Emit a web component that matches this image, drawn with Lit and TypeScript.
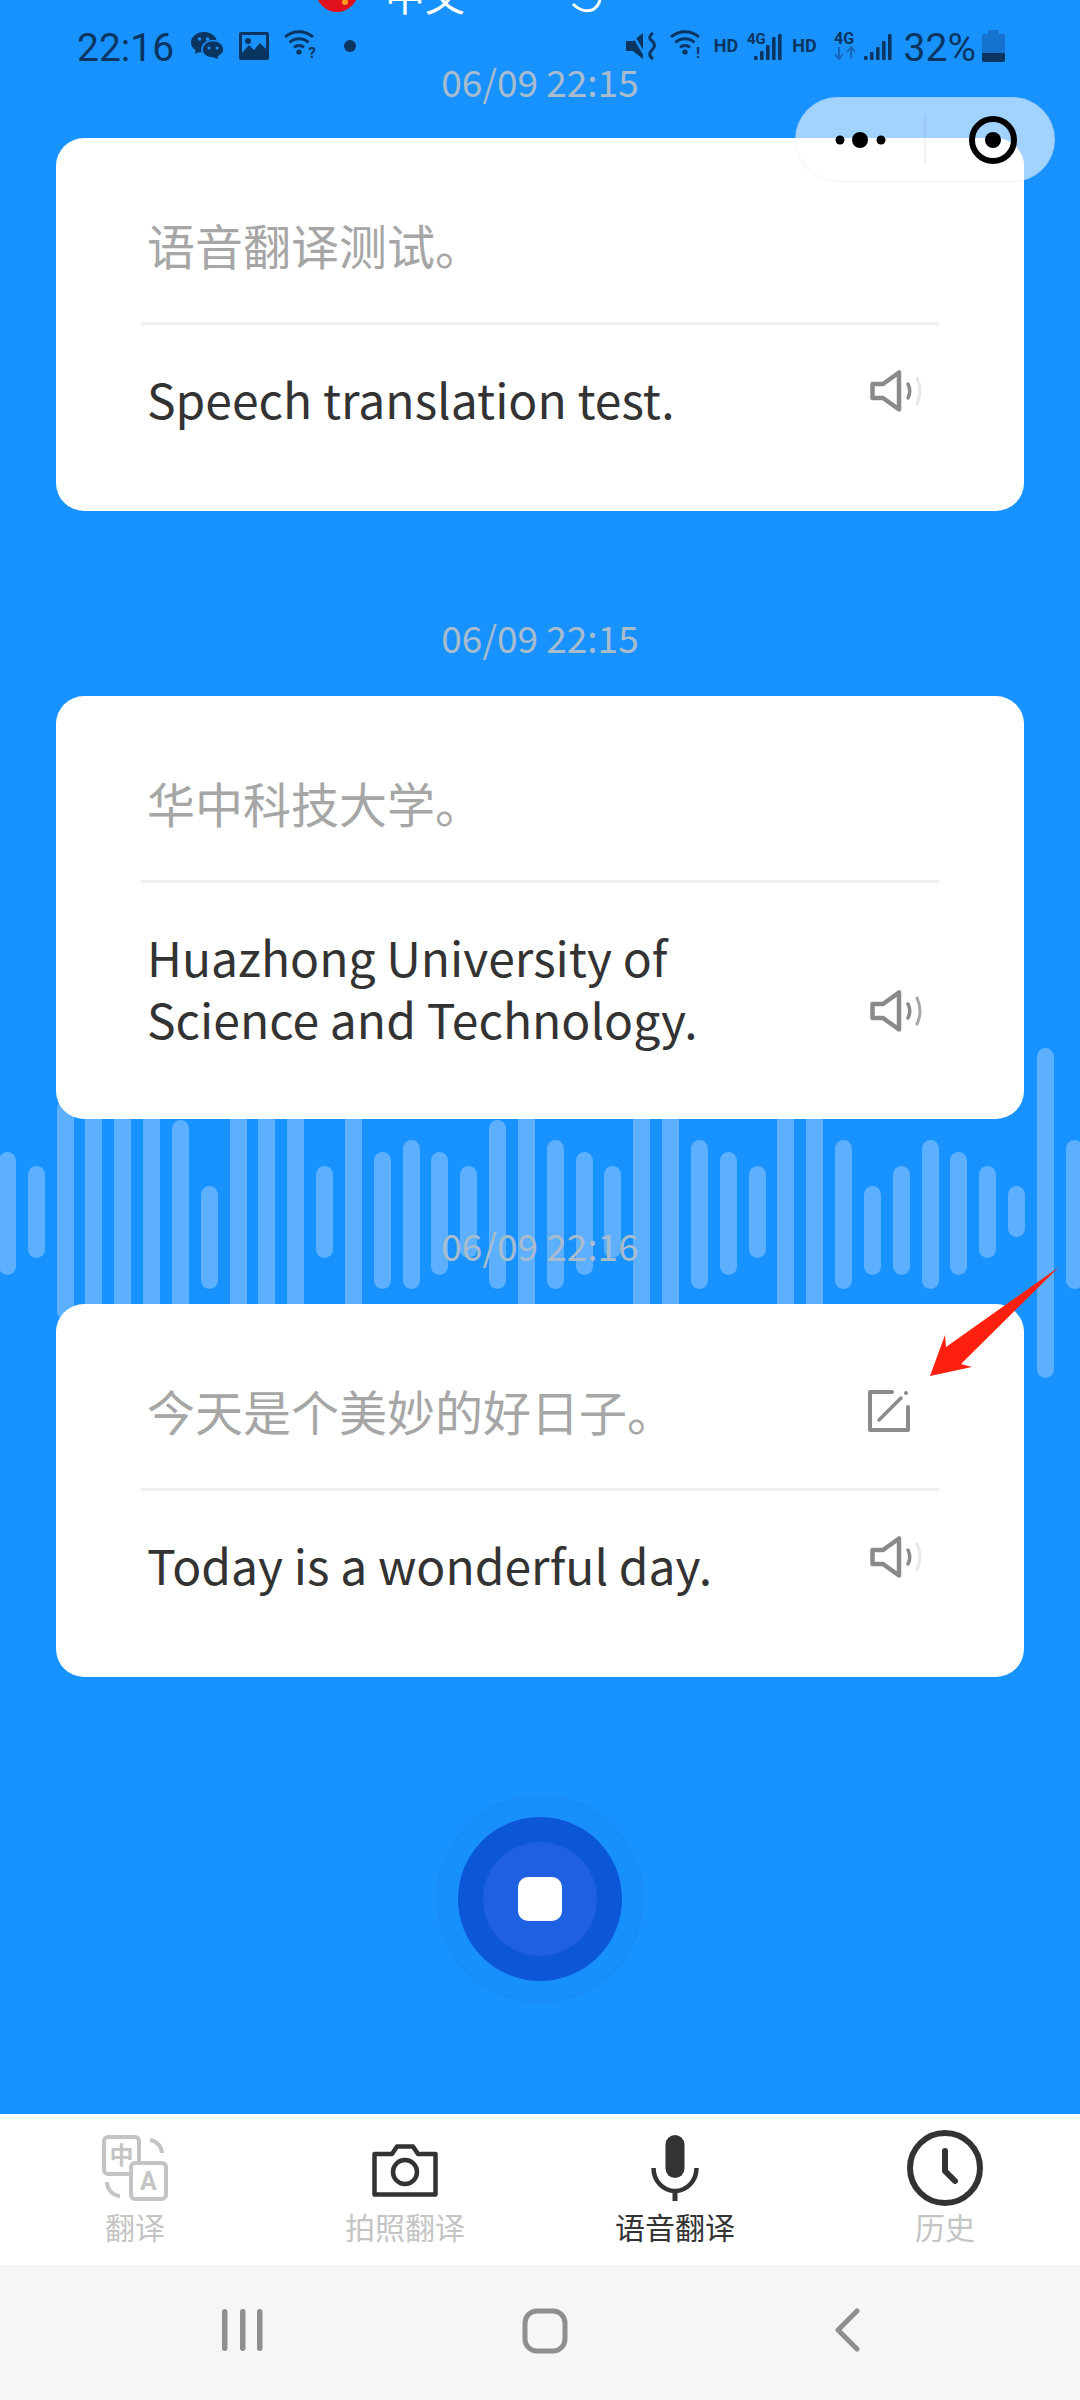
import { LitElement, html, svg, css } from 'lit';
import { customElement } from 'lit/decorators.js';

const T: [number, number] = [60, 720];

// waveform bars: top and bottom in px from the top of the wave strip
const BARS: [number, number][] = [
  [215, 585], [258, 533], T, T, T, T, [120, 720], [318, 628], T, T, T, [258, 533],
  T, [215, 628], [180, 628], [215, 585], [258, 533], [120, 628], T, [180, 628], [215, 585], [258, 533],
  T, T, [180, 628], [215, 585], [258, 533], T, T, [180, 628], [318, 585], [258, 585],
  [180, 628], [215, 585], [258, 533], [318, 472], [-96, 895], [180, 628],
];

const MESSAGES = [
  { time: '06/09 22:15', zh: '语音翻译测试。', en: 'Speech translation test.', edit: false, loud: false },
  { time: '06/09 22:15', zh: '华中科技大学。', en: 'Huazhong University of Science and Technology.', edit: false, loud: true },
  { time: '06/09 22:16', zh: '今天是个美妙的好日子。', en: 'Today is a wonderful day.', edit: true, loud: false },
];

const wifi = (mark: string, cls: string) => html`
  <svg class=${cls} width="34" height="36" viewBox="0 0 34 36" fill="none" stroke="#0b3561" stroke-width="3">
    <path d="M1 9 A21 21 0 0 1 29 9" />
    <path d="M5.5 14.5 A14 14 0 0 1 24.5 14.5" />
    <path d="M10 19.5 A7.5 7.5 0 0 1 20 19.5" />
    <circle cx="15" cy="24" r="2.6" fill="#0b3561" stroke="none" />
    <text x="28" y="30" text-anchor="middle" font-family="Roboto" font-weight="700" font-size="15" fill="#0b3561" stroke="none">${mark}</text>
  </svg>`;

const bars = (tops: number[], x0: number) =>
  tops.map((t, i) => svg`<rect x=${x0 + i * 6} y=${t} width="3.6" height=${30 - t} rx="1" fill="#0b3561" />`);

const speaker = (loud: boolean) => html`
  <svg class="speaker" width="53" height="42" viewBox="0 0 53 42" fill="none" stroke-linecap="round" stroke-linejoin="round">
    <path d="M2.5 14 H13 L29 2.5 V39.5 L13 28 H2.5 Z" stroke="#8a8a8a" stroke-width="4.5" />
    <path d="M38 14 Q41.5 21 38 28" stroke="#8a8a8a" stroke-width="3.5" />
    <path d="M47 8 Q53 21 47 34" stroke=${loud ? '#a8a8a8' : '#e8e8e8'} stroke-width="3" />
  </svg>`;

@customElement('app-root')
export class AppRoot extends LitElement {
  static styles = css`
    :host {
      display: block;
      width: 1080px;
      height: 2400px;
      position: relative;
      overflow: hidden;
      font-family: 'Noto Sans CJK SC', 'Noto Sans', sans-serif;
      background: #1892ff;
    }

    .page {
      height: 2400px;
      display: flex;
      flex-direction: column;
    }

    .main {
      flex: 1;
      position: relative;
    }

    /* status bar */
    .status {
      height: 64px;
      box-sizing: border-box;
      padding: 30px 75px 0 77px;
      display: flex;
      justify-content: space-between;
      align-items: flex-start;
      color: #0b3561;
      font-family: Roboto, sans-serif;
      font-size: 39px;
      line-height: 34px;
      position: relative;
      z-index: 2;
    }

    .st-group {
      display: flex;
      align-items: center;
      height: 32px;
    }

    .st-left {
      gap: 15px;
    }

    .st-time {
      margin-right: 2px;
      padding-top: 3px;
    }

    .st-dot {
      width: 12px;
      height: 12px;
      border-radius: 50%;
      background: #0b3561;
      margin-left: 11px;
    }

    .hd {
      font-size: 18px;
      font-weight: 700;
    }

    .pct {
      padding-top: 3px;
    }

    .m6 {
      margin-left: 6px;
    }

    .m8 {
      margin-left: 8px;
    }

    .m10 {
      margin-left: 10px;
    }

    .m12 {
      margin-left: 12px;
    }

    .m13 {
      margin-left: 13px;
    }

    .m16 {
      margin-left: 16px;
    }

    .peek {
      position: absolute;
      top: 0;
      left: 0;
    }

    /* waveform behind the cards */
    .wave {
      position: absolute;
      left: -1px;
      top: 1048px;
      display: flex;
      gap: 11.84px;
      align-items: flex-start;
    }

    .bar {
      width: 17px;
      flex: none;
      border-radius: 9px;
      background: #5cb0ff;
    }

    /* cards */
    .list {
      position: relative;
      z-index: 1;
    }

    .stamp {
      height: 34px;
      line-height: 34px;
      text-align: center;
      font-size: 37px;
      color: #a8bccd;
      margin-bottom: 40px;
    }

    .msg + .msg .stamp {
      margin-top: 109px;
      margin-bottom: 42px;
    }

    .card {
      margin: 0 56px;
      padding: 0 85px;
      background: #fff;
      border-radius: 28px;
    }

    .zh {
      height: 187px;
      box-sizing: border-box;
      padding: 0 29px 0 6px;
      display: flex;
      justify-content: space-between;
      align-items: center;
      border-bottom: 3px solid #f0f0f0;
      font-size: 48px;
      color: #a6a6a6;
    }

    .zh span {
      margin-top: 28px;
    }

    .zh svg {
      margin-top: 29px;
    }

    .en {
      min-height: 186px;
      box-sizing: border-box;
      padding: 42px 16px 70px 6px;
    }

    .en-row {
      display: flex;
      justify-content: space-between;
      align-items: flex-end;
    }

    .en-text {
      max-width: 640px;
      font-size: 48px;
      line-height: 62px;
      color: #333;
    }

    .speaker {
      margin-bottom: 17px;
    }

    /* record button */
    .record {
      width: 208px;
      height: 208px;
      margin: 118px auto 0;
      box-sizing: border-box;
      border-radius: 50%;
      border: 2px solid #1a8cf5;
      background: #1890fc;
      display: flex;
      align-items: center;
      justify-content: center;
      position: relative;
      z-index: 1;
    }

    .record-outer {
      width: 164px;
      height: 164px;
      border-radius: 50%;
      background: #0c56d8;
      display: flex;
      align-items: center;
      justify-content: center;
    }

    .record-inner {
      width: 114px;
      height: 114px;
      border-radius: 50%;
      background: #1f60e0;
      display: flex;
      align-items: center;
      justify-content: center;
    }

    .record-stop {
      width: 44px;
      height: 44px;
      border-radius: 10px;
      background: #fff;
    }

    /* tabs */
    .tabs {
      height: 151px;
      flex: none;
      box-sizing: border-box;
      padding-top: 21px;
      background: #fff;
      display: grid;
      grid-template-columns: repeat(4, 270px);
    }

    .tab {
      display: flex;
      flex-direction: column;
      align-items: center;
      font-size: 30px;
      color: #c4c4c4;
    }

    .tab.on {
      color: #333;
    }

    .tab-icon {
      height: 66px;
      display: flex;
      align-items: center;
      justify-content: center;
    }

    .tab-label {
      height: 40px;
      line-height: 40px;
      margin-top: 5px;
    }

    .cam {
      margin-top: 5px;
    }

    /* android nav */
    .nav {
      height: 135px;
      flex: none;
      background: #f6f6f6;
      display: grid;
      grid-template-columns: 243px 300px 305px;
      justify-items: end;
      padding-top: 43px;
      box-sizing: border-box;
    }

    .nav-recents {
      margin-right: -23px;
    }

    .nav-home {
      margin-right: -25px;
    }

    .nav-back {
      margin-right: -12px;
    }

    /* capsule + annotation sit over the page */
    .capsule {
      position: absolute;
      left: 795px;
      top: 97px;
      width: 260px;
      height: 85px;
      box-sizing: border-box;
      border-radius: 43px;
      border: 1px solid rgba(0, 0, 0, 0.05);
      background: rgba(255, 255, 255, 0.6);
      z-index: 3;
    }

    .arrow {
      position: absolute;
      left: 0;
      top: 0;
      z-index: 4;
    }
  `;

  render() {
    return html`
      <div class="page">
        <div class="status">
          <div class="st-group st-left">
            <span class="st-time">22:16</span>
            <svg width="33" height="28" viewBox="0 0 33 28">
              <path d="M13 0 C6 0 0 4.5 0 10.5 C0 14 2 16.5 4.5 18 L4 22 L8.5 20 C10 20.5 11.5 20.8 13 20.8 C20 20.8 26 16 26 10.5 C26 4.5 20 0 13 0Z" fill="#0b3561" />
              <path d="M22 8.5 C15.5 8.5 11 12.5 11 17.5 C11 22.5 15.5 26 22 26 L28 28 L27.5 24.5 C30.8 22.8 33 20.5 33 17.5 C33 12.5 28 8.5 22 8.5Z" fill="#0b3561" stroke="#1892ff" stroke-width="1.5" />
              <circle cx="8.5" cy="7" r="1.8" fill="#1892ff" />
              <circle cx="16.5" cy="7" r="1.8" fill="#1892ff" />
              <circle cx="18" cy="16" r="1.5" fill="#1892ff" />
              <circle cx="26" cy="16" r="1.5" fill="#1892ff" />
            </svg>
            <svg width="30" height="28" viewBox="0 0 30 28">
              <rect width="30" height="28" rx="2" fill="#0b3561" />
              <rect x="3" y="3" width="24" height="18" fill="#1892ff" />
              <circle cx="9" cy="9" r="3" fill="#0b3561" />
              <path d="M3 21 L10 13 L15 18 L21 11 L27 17 V24 H3Z" fill="#0b3561" />
            </svg>
            ${wifi('?', '')}
            <span class="st-dot"></span>
          </div>
          <div class="st-group">
            <svg width="31" height="28" viewBox="0 0 31 28">
              <path d="M0 9 H7 L17 1 V27 L7 19 H0Z" fill="#0b3561" />
              <path d="M5 0 L20 25" stroke="#1892ff" stroke-width="2.5" />
              <path d="M27 1 Q21 5 26 9 T26 18 T27 27" fill="none" stroke="#0b3561" stroke-width="3" />
            </svg>
            ${wifi('!', 'm13')}
            <span class="hd m10">HD</span>
            <svg class="m8" width="36" height="32" viewBox="0 0 36 32">
              <text x="1" y="14" font-family="Roboto" font-weight="700" font-size="15" fill="#0b3561">4G</text>
              ${bars([26, 21, 15, 7, 4], 8)}
            </svg>
            <span class="hd m10">HD</span>
            <svg class="m16" width="24" height="32" viewBox="0 0 24 32">
              <text x="1" y="14" font-family="Roboto" font-weight="700" font-size="16" fill="#0b3561">4G</text>
              <path d="M6 17 V28 M2 24 L6 29 L10 24" fill="none" stroke="#1668ba" stroke-width="2" />
              <path d="M18 29 V18 M14 22 L18 17 L22 22" fill="none" stroke="#1668ba" stroke-width="2" />
            </svg>
            <svg class="m6" width="29" height="32" viewBox="0 0 29 32">${bars([26, 22, 17, 11, 4], 1)}</svg>
            <span class="pct m12">32%</span>
            <svg class="m6" width="23" height="32" viewBox="0 0 23 32">
              <rect x="6" y="0" width="11" height="6" rx="1" fill="#1573cf" />
              <rect x="0" y="4" width="23" height="28" rx="2" fill="#1573cf" />
              <path d="M0 23 H23 V30 a2 2 0 0 1 -2 2 H2 a2 2 0 0 1 -2 -2Z" fill="#0b3561" />
            </svg>
          </div>
        </div>

        <svg class="peek" width="620" height="20" viewBox="0 0 620 20">
          <circle cx="337" cy="-9" r="21" fill="#e0101c" />
          <circle cx="345" cy="2" r="3" fill="#ff9a20" />
          <path d="M573 4 Q582 13 592 10 Q598 7 600 0" fill="none" stroke="#fff" stroke-width="3" />
          <text x="385" y="11" font-family="Noto Sans CJK SC" font-size="40" fill="#fff">中文</text>
        </svg>

        <div class="main">
          <div class="wave">
            ${BARS.map(([a, b]) => html`<div class="bar" style="margin-top:${a / 3 - 32}px;height:${(b - a) / 3}px"></div>`)}
          </div>

          <div class="list">
            ${MESSAGES.map((m) => html`
              <div class="msg">
                <div class="stamp">${m.time}</div>
                <div class="card">
                  <div class="zh">
                    <span>${m.zh}</span>
                    ${m.edit ? html`
                      <svg width="42" height="42" viewBox="0 0 42 42" fill="none" stroke="#8a8a8a" stroke-linejoin="round" stroke-linecap="round">
                        <path d="M24 2 H2 V40 H40 V17" stroke-width="4" />
                        <path d="M11 30 L33 8" stroke-width="3.5" />
                        <circle cx="38" cy="3" r="2" fill="#8a8a8a" stroke="none" />
                      </svg>` : ''}
                  </div>
                  <div class="en">
                    <div class="en-row">
                      <div class="en-text">${m.en}</div>
                      ${speaker(m.loud)}
                    </div>
                  </div>
                </div>
              </div>
            `)}
          </div>

          <div class="record">
            <div class="record-outer">
              <div class="record-inner"><div class="record-stop"></div></div>
            </div>
          </div>
        </div>

        <div class="tabs">
          <div class="tab">
            <div class="tab-icon">
              <svg width="66" height="66" viewBox="0 0 66 66" fill="none" stroke="#c4c4c4" stroke-width="4">
                <rect x="2" y="2" width="35" height="37" rx="4" fill="#fff" />
                <path d="M48 5 A14 14 0 0 1 60 18" />
                <path d="M5 47 A14 14 0 0 0 18 61" />
                <rect x="29" y="28" width="35" height="36" rx="4" fill="#fff" />
                <text x="19.5" y="29" text-anchor="middle" font-family="Noto Sans CJK SC" font-size="24" font-weight="700" fill="#c4c4c4" stroke="none">中</text>
                <text x="46.5" y="55" text-anchor="middle" font-family="Roboto" font-size="25" font-weight="700" fill="#c4c4c4" stroke="none">A</text>
              </svg>
            </div>
            <div class="tab-label">翻译</div>
          </div>
          <div class="tab">
            <div class="tab-icon">
              <svg class="cam" width="66" height="53" viewBox="0 0 66 53" fill="none" stroke="#333" stroke-width="4.5" stroke-linejoin="round">
                <path d="M2.5 10 H20 L25 2.5 H41 L46 10 H63.5 V50.5 H2.5Z" />
                <circle cx="33" cy="28" r="12" />
              </svg>
            </div>
            <div class="tab-label">拍照翻译</div>
          </div>
          <div class="tab on">
            <div class="tab-icon">
              <svg width="48" height="66" viewBox="0 0 48 66" fill="none" stroke="#333" stroke-width="4.5">
                <rect x="14.5" y="0" width="19" height="43" rx="9.5" fill="#333" stroke="none" />
                <path d="M2.5 33 a21.5 23 0 0 0 43 0" />
                <path d="M24 56 V66" stroke-width="5" />
              </svg>
            </div>
            <div class="tab-label">语音翻译</div>
          </div>
          <div class="tab">
            <div class="tab-icon">
              <svg width="76" height="76" viewBox="0 0 76 76" fill="none" stroke="#333" stroke-width="6" stroke-linecap="round" stroke-linejoin="round">
                <circle cx="38" cy="38" r="35" />
                <path d="M38 21 V41 L48 51" />
              </svg>
            </div>
            <div class="tab-label">历史</div>
          </div>
        </div>

        <div class="nav">
          <svg class="nav-recents" width="46" height="44" viewBox="0 0 46 44" fill="#8f8f8f">
            <rect x="2" y="1" width="5.5" height="42" rx="2.7" />
            <rect x="20" y="1" width="5.5" height="42" rx="2.7" />
            <rect x="37" y="1" width="5.5" height="42" rx="2.7" />
          </svg>
          <svg class="nav-home" width="46" height="46" viewBox="0 0 46 46" fill="none" stroke="#8f8f8f" stroke-width="5">
            <rect x="3" y="3" width="40" height="40" rx="12" />
          </svg>
          <svg class="nav-back" width="26" height="44" viewBox="0 0 26 44" fill="none" stroke="#8f8f8f" stroke-width="5" stroke-linecap="round" stroke-linejoin="round">
            <path d="M23 3 L4 22 L23 41" />
          </svg>
        </div>
      </div>

      <div class="capsule"></div>
      <svg class="arrow" width="1080" height="1400" viewBox="0 0 1080 1400">
        <circle cx="840" cy="140" r="4.5" fill="#000" />
        <circle cx="860" cy="140" r="8" fill="#000" />
        <circle cx="881" cy="140" r="4.5" fill="#000" />
        <path d="M925 114 V164" stroke="rgba(0,0,0,0.1)" stroke-width="1" />
        <circle cx="993" cy="140" r="21" fill="none" stroke="#000" stroke-width="6" />
        <circle cx="993" cy="140" r="8" fill="#000" />
        <polygon points="1059,1267 946,1347 945,1335 930,1376 972,1367 961,1364" fill="#ff2010" />
      </svg>
    `;
  }
}
